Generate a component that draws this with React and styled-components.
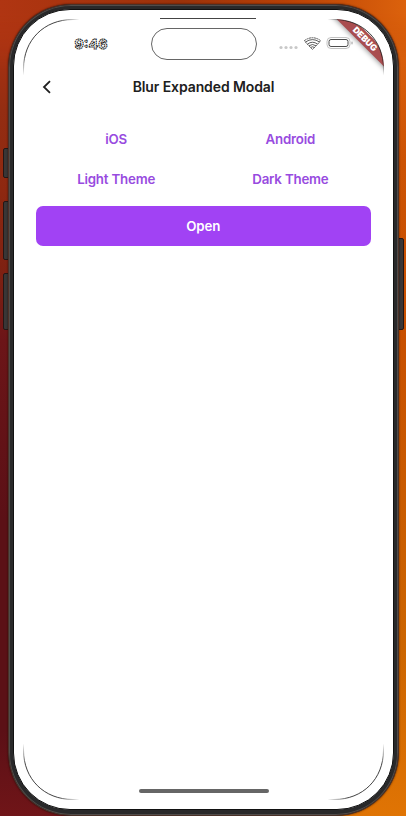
import React from "react";
import styled, { createGlobalStyle } from "styled-components";

const Global = createGlobalStyle`
  * { box-sizing: border-box; }
  body { margin: 0; overflow: hidden; font-family: Inter, "Liberation Sans", sans-serif; }
  button { font: inherit; border: 0; background: none; padding: 0; }
`;

const Desktop = styled.div`
  position: relative;
  width: 406px;
  height: 816px;
  padding: 4px 7px 0 8px;
  overflow: hidden;
  background:
    linear-gradient(180deg, #b03512 0, #a83212 45px, #942d12 110px, #8e2810 190px, #7c2012 280px, #6c1518 340px, #5b1016 520px, #5b1016 730px, #701518 816px) left / 50% 100% no-repeat,
    linear-gradient(180deg, #c34a08 0, #d85e0c 60px, #cc5304 160px, #c85000 340px, #c95b00 500px, #cc6500 650px, #e07404 816px) right / 50% 100% no-repeat;
  &::before {
    content: "";
    position: absolute;
    inset: 0 0 auto;
    height: 70px;
    background: linear-gradient(90deg, #b03512, #9c3209 45%, #b84006 70%, #dc620c);
    mask-image: linear-gradient(#000 20%, transparent);
  }
`;

const SideKey = styled.div`
  position: absolute;
  top: ${(p) => p.$top}px;
  ${(p) => p.$side}: ${(p) => (p.$side === "left" ? 3 : 2)}px;
  width: 7px;
  height: ${(p) => p.$height}px;
  border: 1px solid #241716;
  border-radius: 2px;
  background: #393737;
`;

const Phone = styled.div`
  position: relative;
  height: 812px;
  padding: 4px 4px 5px;
  border: 1px solid #4a3128;
  border-radius: 63px;
  background: #29292a;
  box-shadow: inset 0 0 0 1px #504c4a, 0 0 2px rgba(30, 5, 0, 0.8);
`;

const Glass = styled.main`
  height: 100%;
  padding: 9px;
  border: 1px solid #111;
  border-radius: 57px;
  background: #fff;
`;

const Screen = styled.div`
  position: relative;
  display: flex;
  flex-direction: column;
  height: 100%;
  border-radius: 50px;
`;

const SpeakerLine = styled.div`
  position: absolute;
  top: -1px;
  left: 137px;
  width: 96px;
  height: 1px;
  background: #444;
`;

const CornerLines = styled.svg`
  position: absolute;
  inset: 0;
  width: 100%;
  height: 100%;
  pointer-events: none;
`;

const StatusBar = styled.div`
  display: grid;
  grid-template-columns: 127.5px 106px 1fr;
  align-items: center;
  height: 49px;
  flex: none;
`;

const StatusDrawing = styled.svg`
  display: block;
  overflow: visible;
  margin-left: ${(p) => p.$left || 0}px;
`;

const Island = styled.div`
  height: 32px;
  border: 1px solid #666;
  border-radius: 16px;
`;

const NavBar = styled.header`
  display: grid;
  grid-template-columns: 48px 1fr 48px;
  align-items: center;
  height: 38px;
  flex: none;
`;

const BackButton = styled.button`
  display: flex;
  justify-content: center;
`;

const Title = styled.h1`
  margin: 0;
  color: #202020;
  font-size: 14px;
  line-height: 20px;
  font-weight: 600;
  letter-spacing: -0.1px;
  text-align: center;
  white-space: nowrap;
`;

const Content = styled.section`
  padding: 13px 13.5px 0 13px;
`;

const Options = styled.div`
  display: grid;
  grid-template-columns: 1fr 1fr;
  column-gap: 14px;
  grid-auto-rows: 40px;
`;

const Option = styled.button`
  color: #984bdf;
  font-size: 13.3px;
  font-weight: 600;
  letter-spacing: -0.2px;
`;

const OpenButton = styled.button`
  width: 100%;
  height: 40px;
  margin-top: 7px;
  border-radius: 7px;
  background: #a142f4;
  color: #fff;
  font-size: 13.3px;
  font-weight: 600;
  letter-spacing: -0.15px;
`;

const HomeBar = styled.div`
  width: 130px;
  height: 4px;
  margin: auto auto 7px;
  border-radius: 2px;
  background: #666;
`;

const RibbonClip = styled.div`
  position: absolute;
  top: 0;
  right: 0;
  width: 70px;
  height: 70px;
  border-top-right-radius: 50px;
  overflow: hidden;
`;

const Ribbon = styled.div`
  position: absolute;
  top: 14px;
  right: -31px;
  width: 100px;
  height: 12px;
  transform: rotate(45deg);
  background: #a94d4f;
  box-shadow: 0 1px 5px rgba(0, 0, 0, 0.4);
  color: #fff;
  font-size: 8.7px;
  line-height: 12px;
  font-weight: 900;
  text-align: center;
`;

const keys = [
  ["left", 148, 30], ["left", 201, 59], ["left", 273, 57], ["right", 238, 92],
];

const cornerTransforms = [
  undefined,
  "translate(361 0) scale(-1 1)",
  "translate(0 781) scale(1 -1)",
  "translate(361 781) scale(-1 -1)",
];

export default function App() {
  return (
    <Desktop>
      <Global />
      {keys.map(([side, top, height]) => (
        <SideKey key={top} $side={side} $top={top} $height={height} />
      ))}
      <Phone>
        <Glass>
          <Screen>
            <SpeakerLine />
            <StatusBar>
              <StatusDrawing width="34" height="16" $left={51}>
                <text x="0.5" y="12.7" textLength="33" lengthAdjust="spacingAndGlyphs" fontFamily="Inter" fontSize="13.8" fontWeight="700" fill="#fff" stroke="#000" strokeWidth=".9" strokeDasharray="1.5 .5">9:46</text>
              </StatusDrawing>
              <Island />
              <StatusDrawing width="75" height="16" viewBox="0 0 75 16" fill="none" $left={22}>
                <g fill="#c8c8c8">{[2, 7, 12, 17].map((x) => <circle key={x} cx={x} cy="11.5" r="1.6" />)}</g>
                <g stroke="#333" strokeWidth=".8">
                  <path d="M25.5 4.5Q33.5 -1 41.5 4.5L40 6.7L33.5 13.5L27 6.7Z" strokeDasharray="2 .5" />
                  <path d="M26.5 6Q33.5 1.2 40.5 6M28.5 8Q33.5 4.5 38.5 8M30 9.8Q33.5 7.2 37 9.8M31.6 11.5Q33.5 10 35.4 11.5" />
                </g>
                <rect x="48" y="1.5" width="23" height="11" rx="4" stroke="#bbb" strokeWidth=".9" />
                <rect x="50" y="3.5" width="19" height="7" rx="2" stroke="#222" strokeWidth=".8" />
                <path d="M73 5.7v2.6" stroke="#999" />
              </StatusDrawing>
            </StatusBar>
            <NavBar>
              <BackButton aria-label="Back">
                <svg width="10" height="14" viewBox="0 0 10 14" fill="none"><path d="M8 1.2L2 7l6 5.8" stroke="#202020" strokeWidth="1.8" /></svg>
              </BackButton>
              <Title>Blur Expanded Modal</Title>
            </NavBar>
            <Content>
              <Options>
                {["iOS", "Android", "Light Theme", "Dark Theme"].map((label) => <Option key={label}>{label}</Option>)}
              </Options>
              <OpenButton>Open</OpenButton>
            </Content>
            <HomeBar />
            <RibbonClip><Ribbon>DEBUG</Ribbon></RibbonClip>
            <CornerLines viewBox="0 0 361 781" preserveAspectRatio="none" fill="none">
              <defs>
                <linearGradient id="edgeFade" gradientUnits="userSpaceOnUse" x1="0" y1="56" x2="56" y2="0">
                  <stop offset="0" stopColor="#111" stopOpacity="0" />
                  <stop offset=".2" stopColor="#111" />
                  <stop offset=".8" stopColor="#111" />
                  <stop offset="1" stopColor="#111" stopOpacity="0" />
                </linearGradient>
              </defs>
              {cornerTransforms.map((transform, i) => (
                <path key={i} transform={transform} stroke="url(#edgeFade)" strokeWidth=".8" d="M.5 56V50C.5 21 21 .5 50 .5H56" />
              ))}
            </CornerLines>
          </Screen>
        </Glass>
      </Phone>
    </Desktop>
  );
}
